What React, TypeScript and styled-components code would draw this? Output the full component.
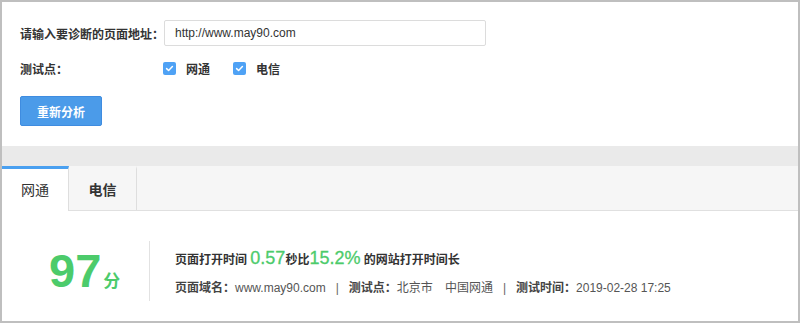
import React from 'react';
import styled, { createGlobalStyle } from 'styled-components';

const GlobalStyle = createGlobalStyle`
  html, body {
    margin: 0;
    padding: 0;
    background: #ffffff;
  }
  body {
    font-family: "Liberation Sans", Arial, "Noto Sans CJK SC", sans-serif;
    color: #333333;
  }
  * { box-sizing: border-box; }
`;

const GREEN = '#4ccb6b';
const BLUE = '#4b9be9';

export default function App() {
  return (
    <>
      <GlobalStyle />
      <Frame>
        <FormPanel>
          <FormRow>
            <FieldLabel>请输入要诊断的页面地址：</FieldLabel>
            <UrlInput defaultValue="http://www.may90.com" />
          </FormRow>
          <FormRow $compact>
            <FieldLabel>测试点：</FieldLabel>
            <CheckGroup>
              <CheckItem>
                <CheckBox><CheckMark /></CheckBox>
                <span>网通</span>
              </CheckItem>
              <CheckItem>
                <CheckBox><CheckMark /></CheckBox>
                <span>电信</span>
              </CheckItem>
            </CheckGroup>
          </FormRow>
          <PrimaryButton type="button">重新分析</PrimaryButton>
        </FormPanel>

        <Band />

        <TabBar>
          <Tab $active>网通</Tab>
          <Tab>电信</Tab>
        </TabBar>

        <ResultPanel>
          <ScoreBlock>
            <ScoreValue>97</ScoreValue>
            <ScoreUnit>分</ScoreUnit>
          </ScoreBlock>
          <Summary>
            <SummaryLine>
              页面打开时间 <Highlight>0.57</Highlight>秒比<Highlight>15.2%</Highlight> 的网站打开时间长
            </SummaryLine>
            <MetaLine>
              <MetaKey>页面域名：</MetaKey>www.may90.com
              <Pipe>|</Pipe>
              <MetaKey>测试点：</MetaKey>北京市<Gap />中国网通
              <Pipe>|</Pipe>
              <MetaKey>测试时间：</MetaKey>2019-02-28 17:25
            </MetaLine>
          </Summary>
        </ResultPanel>
      </Frame>
    </>
  );
}

function CheckMark() {
  return (
    <svg width="9" height="9" viewBox="0 0 9 9" fill="none">
      <path d="M1.6 4.6 L3.6 6.5 L7.4 2.6" stroke="#ffffff" strokeWidth="1.5" strokeLinecap="round" strokeLinejoin="round" />
    </svg>
  );
}

// ─── STYLED COMPONENTS ──────────────────────────────────────────

const Frame = styled.div`
  width: 800px;
  height: 323px;
  border: 2px solid #bfbfbf;
  display: flex;
  flex-direction: column;
  overflow: hidden;
  background: #ffffff;
`;

const FormPanel = styled.div`
  padding: 18px 18px 20px;
  display: flex;
  flex-direction: column;
  align-items: flex-start;
`;

const FormRow = styled.div<{ $compact?: boolean }>`
  display: flex;
  align-items: center;
  height: ${({ $compact }) => ($compact ? '20px' : '26px')};
  margin-bottom: ${({ $compact }) => ($compact ? '18px' : '12px')};
`;

const FieldLabel = styled.label`
  width: 143px;
  flex-shrink: 0;
  white-space: nowrap;
  font-size: 12px;
  font-weight: bold;
  color: #333333;
`;

const UrlInput = styled.input`
  width: 322px;
  height: 26px;
  margin-left: 1px;
  border: 1px solid #dcdcdc;
  border-radius: 2px;
  padding: 0 10px;
  font-family: "Liberation Sans", Arial, sans-serif;
  font-size: 12px;
  color: #333333;
  outline: none;
`;

const CheckGroup = styled.div`
  display: flex;
  align-items: center;
  gap: 23px;
`;

const CheckItem = styled.label`
  display: flex;
  align-items: center;
  gap: 10px;
  font-size: 12px;
  font-weight: bold;
  color: #333333;
`;

const CheckBox = styled.span`
  width: 13px;
  height: 13px;
  border-radius: 2px;
  background: #4fa2f5;
  display: flex;
  align-items: center;
  justify-content: center;
`;

const PrimaryButton = styled.button`
  width: 82px;
  height: 30px;
  border: 1px solid #3f8ce0;
  border-radius: 2px;
  background: ${BLUE};
  color: #ffffff;
  font-family: "Liberation Sans", Arial, "Noto Sans CJK SC", sans-serif;
  font-size: 12px;
  font-weight: bold;
  cursor: pointer;
`;

const Band = styled.div`
  height: 20px;
  background: #eaeaea;
  flex-shrink: 0;
`;

const TabBar = styled.div`
  display: flex;
  height: 45px;
  background: #f6f6f6;
  border-bottom: 1px solid #e0e0e0;
  flex-shrink: 0;
`;

const Tab = styled.div<{ $active?: boolean }>`
  width: ${({ $active }) => ($active ? '67px' : '68px')};
  height: ${({ $active }) => ($active ? '45px' : '44px')};
  display: flex;
  align-items: center;
  justify-content: center;
  font-size: 14px;
  font-weight: ${({ $active }) => ($active ? 'normal' : 'bold')};
  color: #333333;
  background: ${({ $active }) => ($active ? '#ffffff' : 'transparent')};
  border-top: 3px solid ${({ $active }) => ($active ? '#4aa0f0' : 'transparent')};
  border-right: 1px solid #dedede;
  padding-bottom: 2px;
`;

const ResultPanel = styled.div`
  display: flex;
  align-items: center;
  padding-top: 30px;
`;

const ScoreBlock = styled.div`
  width: 148px;
  height: 60px;
  display: flex;
  align-items: baseline;
  justify-content: flex-start;
  padding-left: 47px;
  border-right: 1px solid #e2e2e2;
  color: ${GREEN};
`;

const ScoreValue = styled.span`
  font-size: 47px;
  font-weight: bold;
  line-height: 60px;
  letter-spacing: 0;
`;

const ScoreUnit = styled.span`
  font-size: 17px;
  font-weight: bold;
  margin-left: 2px;
`;

const Summary = styled.div`
  display: flex;
  flex-direction: column;
  gap: 7px;
  padding-left: 25px;
  padding-top: 3px;
`;

const SummaryLine = styled.div`
  font-size: 12px;
  font-weight: bold;
  color: #333333;
  line-height: 22px;
  white-space: nowrap;
`;

const Highlight = styled.span`
  font-size: 18px;
  font-weight: normal;
  color: ${GREEN};
  -webkit-text-stroke: 0.3px ${GREEN};
`;

const MetaLine = styled.div`
  font-size: 12px;
  color: #555555;
  line-height: 20px;
  white-space: nowrap;
`;

const MetaKey = styled.span`
  font-weight: bold;
  color: #444444;
`;

const Pipe = styled.span`
  margin: 0 10px;
  color: #666666;
`;

const Gap = styled.span`
  display: inline-block;
  width: 12px;
`;
